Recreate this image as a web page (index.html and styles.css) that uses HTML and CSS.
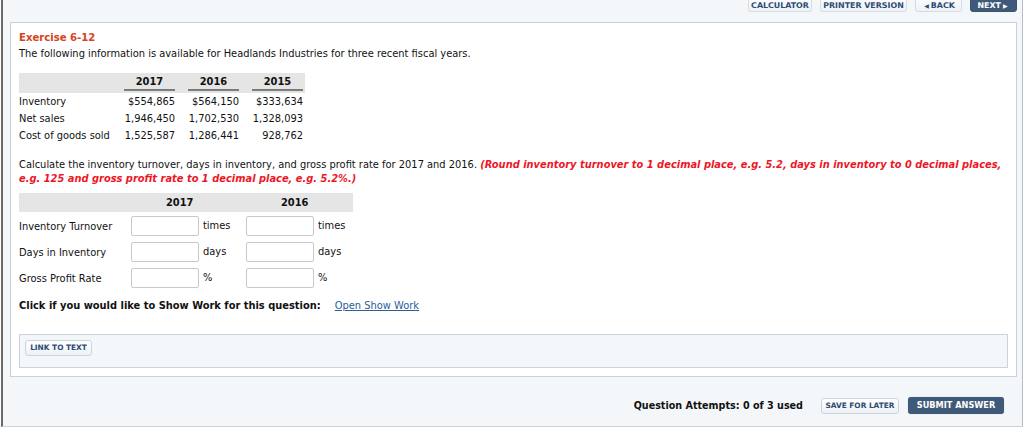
FILE: index.html
```html
<!DOCTYPE html>
<html>
<head>
<meta charset="utf-8">
<link rel="stylesheet" href="styles.css">
</head>
<body>
<div class="page">
  <div class="topbar">
    <span class="tbtn calc-btn">CALCULATOR</span>
    <span class="tbtn print-btn">PRINTER VERSION</span>
    <span class="tbtn back-btn"><span class="arrow">&#9664;</span>BACK</span>
    <span class="tbtn next-btn">NEXT<span class="arrow">&#9654;</span></span>
  </div>
  <div class="panel">
    <div class="title">Exercise 6-12</div>
    <p class="intro">The following information is available for Headlands Industries for three recent fiscal years.</p>
    <div class="data">
      <div class="dhead"></div>
      <div class="dhead"><span>2017</span></div>
      <div class="dhead"><span>2016</span></div>
      <div class="dhead last"><span>2015</span></div>
      <div class="lbl">Inventory</div><div class="num">$554,865</div><div class="num">$564,150</div><div class="num last">$333,634</div>
      <div class="lbl">Net sales</div><div class="num">1,946,450</div><div class="num">1,702,530</div><div class="num last">1,328,093</div>
      <div class="lbl">Cost of goods sold</div><div class="num">1,525,587</div><div class="num">1,286,441</div><div class="num last">928,762</div>
    </div>
    <p class="calc">Calculate the inventory turnover, days in inventory, and gross profit rate for 2017 and 2016. <em class="hint">(Round inventory turnover to 1 decimal place, e.g. 5.2, days in inventory to 0 decimal places, e.g. 125 and gross profit rate to 1 decimal place, e.g. 5.2%.)</em></p>
    <div class="answers">
      <div class="ahead"></div>
      <div class="ahead yr">2017</div>
      <div class="ahead yr">2016</div>
      <div class="albl">Inventory Turnover</div>
      <div class="cell"><span class="box"></span><span class="unit">times</span></div>
      <div class="cell"><span class="box"></span><span class="unit">times</span></div>
      <div class="albl">Days in Inventory</div>
      <div class="cell"><span class="box"></span><span class="unit">days</span></div>
      <div class="cell"><span class="box"></span><span class="unit">days</span></div>
      <div class="albl">Gross Profit Rate</div>
      <div class="cell"><span class="box"></span><span class="unit">%</span></div>
      <div class="cell"><span class="box"></span><span class="unit">%</span></div>
    </div>
    <div class="showwork"><b>Click if you would like to Show Work for this question:</b><a class="swlink">Open Show Work</a></div>
    <div class="linkbox"><span class="lbtn">LINK TO TEXT</span></div>
  </div>
  <div class="footer">
    <span class="attempts">Question Attempts: 0 of 3 used</span>
    <span class="save">SAVE FOR LATER</span>
    <span class="submit">SUBMIT ANSWER</span>
  </div>
</div>
</body>
</html>
```

FILE: styles.css
```css
html, body {
  margin: 0;
  padding: 0;
  background: #ffffff;
}
body {
  font-family: "DejaVu Sans", Verdana, sans-serif;
  font-size: 9.9px;
  color: #111;
}
.page {
  margin-left: 1px;
  width: 1022px;
  height: 427px;
  box-sizing: border-box;
  border-left: 2px solid #6a6a6a;
  border-right: 1px solid #b4bcc4;
  border-bottom: 1px solid #c9d3dd;
  background: #f4f7fa;
  padding-left: 7px;
}
.topbar {
  display: flex;
  justify-content: flex-end;
  gap: 8px;
  height: 22px;
  padding-right: 5px;
}
.tbtn {
  margin-top: -6px;
  height: 18px;
  box-sizing: border-box;
  padding-top: 6px;
  border: 1px solid #d3dbe3;
  border-radius: 3px;
  background: linear-gradient(#ffffff, #eef2f6);
  color: #2e4b73;
  font-weight: bold;
  font-size: 7.9px;
  line-height: 9px;
  white-space: nowrap;
  display: flex;
  justify-content: center;
  align-items: flex-start;
}
.calc-btn { width: 64px; }
.print-btn { width: 87px; }
.back-btn { width: 47px; }
.next-btn {
  width: 47px;
  background: #3f5a79;
  border-color: #3a526e;
  color: #ffffff;
}
.arrow { font-size: 6px; margin: 0 2px; }
.panel {
  width: 1007px;
  height: 355px;
  box-sizing: border-box;
  background: #ffffff;
  border: 1px solid #c6d1dc;
  padding: 9px 8px 0;
}
.title {
  color: #d5441d;
  font-weight: bold;
  font-size: 10.1px;
  line-height: 12px;
}
.intro {
  margin: 4px 0 0;
  line-height: 12px;
}
.data {
  margin-top: 13px;
  display: grid;
  grid-template-columns: 92px 64px 64px 66px;
  width: 286px;
}
.dhead {
  background: #e5e5e5;
  height: 20px;
  display: flex;
  align-items: flex-end;
  padding-left: 13px;
}
.dhead:first-child { padding-left: 0; }
.dhead.last { padding-right: 2px; }
.dhead span {
  flex: 1;
  text-align: center;
  font-weight: bold;
  border-bottom: 2px solid #7d7d7d;
  padding-bottom: 2px;
  margin-bottom: 2px;
  line-height: 11px;
}
.lbl, .num {
  display: flex;
  align-items: center;
  height: 17px;
  white-space: nowrap;
}
.num { justify-content: flex-end; }
.num.last { padding-right: 2px; }
.calc {
  margin: 14px 0 0;
  line-height: 14px;
}
.hint {
  color: #ee1626;
  font-weight: bold;
}
.answers {
  margin-top: 7px;
  display: grid;
  grid-template-columns: 112px 115px 107px;
  width: 334px;
}
.ahead {
  background: #e5e5e5;
  height: 19px;
  line-height: 19px;
  font-weight: bold;
}
.ahead.yr { padding-left: 35px; }
.albl, .cell {
  height: 20px;
  display: flex;
  align-items: center;
  margin-top: 4px;
  margin-bottom: 2px;
}
.box {
  width: 68px;
  height: 20px;
  box-sizing: border-box;
  border: 1px solid #c9c9c9;
  border-radius: 2px;
  background: #fff;
}
.unit {
  margin-left: 4px;
  margin-top: -2px;
}
.showwork {
  margin-top: 8px;
  display: flex;
  align-items: center;
  height: 14px;
}
.swlink {
  margin-left: 14px;
  color: #2a5d99;
  text-decoration: underline;
}
.linkbox {
  margin-top: 22px;
  width: 989px;
  height: 34px;
  box-sizing: border-box;
  background: #f4f7fa;
  border: 1px solid #c9d3dd;
  padding: 5px 5px;
}
.lbtn {
  display: inline-block;
  width: 67px;
  height: 16px;
  box-sizing: border-box;
  border: 1px solid #ccd5de;
  border-radius: 3px;
  background: linear-gradient(#ffffff, #edf1f5);
  color: #2e4b73;
  font-weight: bold;
  font-size: 7.4px;
  line-height: 14px;
  text-align: center;
}
.footer {
  display: flex;
  align-items: center;
  justify-content: flex-end;
  padding-top: 20px;
  padding-right: 18px;
}
.attempts {
  font-weight: bold;
  font-size: 9.6px;
  margin-right: 18px;
}
.save {
  width: 78px;
  height: 16px;
  box-sizing: border-box;
  border: 1px solid #ccd5de;
  border-radius: 3px;
  background: linear-gradient(#ffffff, #edf1f5);
  color: #2e4b73;
  font-weight: bold;
  font-size: 7.4px;
  line-height: 14px;
  text-align: center;
  margin-right: 9px;
}
.submit {
  width: 96px;
  height: 17px;
  box-sizing: border-box;
  border-radius: 3px;
  background: #3f5a79;
  color: #fff;
  font-weight: bold;
  font-size: 8.2px;
  line-height: 17px;
  text-align: center;
  box-shadow: 0 0 1px rgba(0,0,0,0.3);
}
```
